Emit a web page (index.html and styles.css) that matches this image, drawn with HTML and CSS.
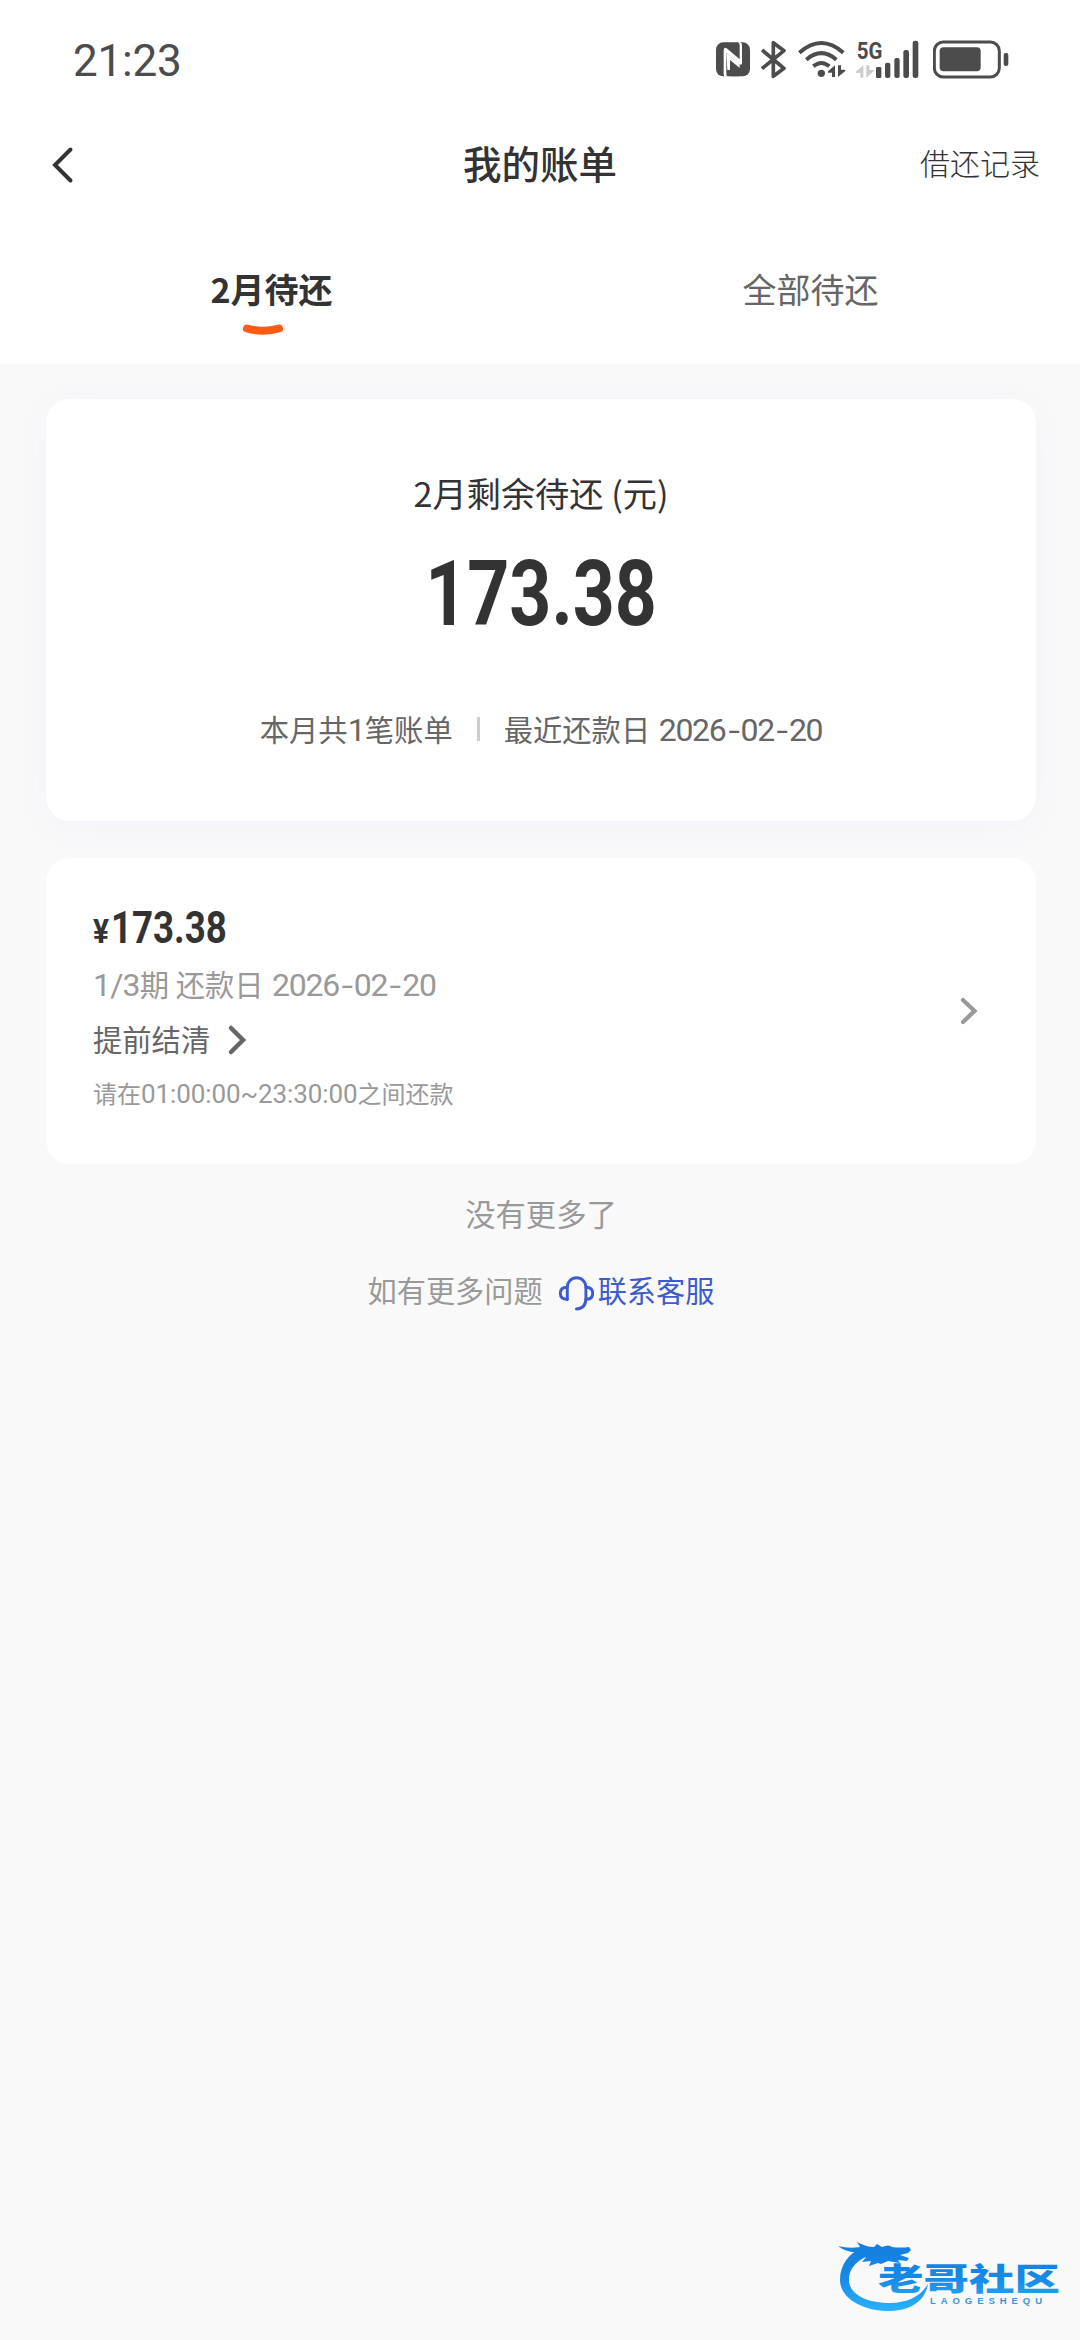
FILE: index.html
```html
<!DOCTYPE html>
<html lang="zh-CN">
<head>
<meta charset="utf-8">
<title>我的账单</title>
<link rel="stylesheet" href="styles.css">
</head>
<body>
<div class="screen">
  <header class="top">
    <div class="status">
      <span class="clock">21:23</span>
      <div class="status-icons">
        <svg class="nfc" viewBox="48 60 102 120"><rect x="48" y="67" width="102" height="102" rx="22" fill="#4c4c4c"/><path d="M82 170H76q-5-1-5-8V92q0-13 11-6l37 32V76q0-7-5-10h6q6 3 6 10v52q0 10-8 4L79 99v60q0 8 3 11z" fill="#fff"/><path d="M79 99l40 33v12L90 120v30h-8z" fill="#fff"/><path d="M90 122l22 21q5 6 5 14v12H90z" fill="#4c4c4c"/></svg>
        <svg class="bt" viewBox="185 60 78 120"><path d="M188 90l66 55-32 24V68l32 24-66 54" fill="none" stroke="#4c4c4c" stroke-width="11" stroke-linejoin="round"/></svg>
        <svg class="wifi" viewBox="296 60 144 120"><g fill="none" stroke="#4c4c4c" stroke-width="12"><path d="M300 98q66-58 132 0"/><path d="M321 119q45-39 90 0"/><path d="M342 139q24-20 48 0"/></g><circle cx="366" cy="160" r="11" fill="#4c4c4c"/><path d="M407 136v35h-9v-13h-12v-4zM416 171v-35h9v13h13v4z" fill="#4c4c4c"/></svg>
        <svg class="signal" viewBox="468 60 189 120"><text class="net" x="470" y="117" textLength="77" lengthAdjust="spacingAndGlyphs">5G</text><path d="M490 136v37h-9v-14h-13v-4zM499 173v-37h9v14h13v4z" fill="#ccc"/><g fill="#4c4c4c"><rect x="528" y="141" width="16" height="33" rx="4"/><rect x="555" y="128" width="16" height="46" rx="6"/><rect x="583" y="114" width="16" height="60" rx="6"/><rect x="610" y="90" width="17" height="84" rx="7"/><rect x="638" y="62" width="17" height="112" rx="7"/></g></svg>
        <svg class="battery" viewBox="700 60 228 120"><rect x="704" y="66" width="195" height="105" rx="27" fill="none" stroke="#4c4c4c" stroke-width="9"/><rect x="720" y="82" width="123" height="72" rx="12" fill="#4c4c4c"/><rect x="912" y="99" width="14" height="39" rx="6" fill="#4c4c4c"/></svg>
      </div>
    </div>
    <nav class="navbar">
      <svg class="back" viewBox="0 0 24 40"><path d="M19.500 4.500 4 20l15.500 15.500" fill="none" stroke="#333" stroke-width="4" stroke-linecap="round"/></svg>
      <h1 class="title">我的账单</h1>
      <span class="records">借还记录</span>
    </nav>
    <div class="tabs">
      <div class="tab tab-active"><span>2月待还</span>
        <svg class="smile" viewBox="0 0 42 14"><path d="M5 4.500Q21 9 37 4.500" fill="none" stroke="#ff5a12" stroke-width="8" stroke-linecap="round"/></svg>
      </div>
      <div class="tab"><span>全部待还</span></div>
    </div>
  </header>
  <main class="content">
    <section class="card summary">
      <div class="summary-label">2月剩余待还 (元)</div>
      <div class="amount">173.38</div>
      <div class="summary-meta"><span>本月共<span class="num">1</span>笔账单</span><i class="divider"></i><span>最近还款日 <span class="num date">2026<b>-</b>02<b>-</b>20</span></span></div>
    </section>
    <section class="card bill">
      <div class="bill-info">
        <div class="price"><span class="yen">¥</span><span class="price-value">173.38</span></div>
        <div class="term"><span class="num frac">1/3</span>期 还款日 <span class="num date">2026<b>-</b>02<b>-</b>20</span></div>
        <div class="settle">提前结清<svg class="settle-arrow" viewBox="0 0 20 32"><path d="M4 4l12 12L4 28" fill="none" stroke="#666" stroke-width="4.500" stroke-linecap="round"/></svg></div>
        <div class="hint">请在<span class="num clock-range">01:00:00~23:30:00</span>之间还款</div>
      </div>
      <svg class="bill-arrow" viewBox="0 0 20 32"><path d="M4 5l11.500 11L4 27" fill="none" stroke="#999" stroke-width="4.200" stroke-linecap="round"/></svg>
    </section>
    <div class="no-more">没有更多了</div>
    <div class="help"><span>如有更多问题</span>
      <svg class="headset" viewBox="0 0 36 36"><g fill="none" stroke="#3d5bd0" stroke-width="2.900" stroke-linecap="round"><path d="M9.300 24.500V12a9.300 9.300 0 0 1 18.600 0v11.500q0 10-9.500 10.500"/><path d="M9.300 12.300q-7 0-7 6t7 6M27.900 12.300q6.800 0 6.800 6t-6.800 6"/></g></svg>
      <a class="service">联系客服</a></div>
  </main>
  <svg class="watermark" viewBox="0 0 270 120">
    <defs><linearGradient id="blue" x1="0" y1="28" x2="0" y2="92" gradientUnits="userSpaceOnUse"><stop offset="0" stop-color="#1480e0"/><stop offset=".45" stop-color="#1688e6"/><stop offset="1" stop-color="#2ab4fb"/></linearGradient></defs>
    <g fill="url(#blue)">
      <path d="M52 28C38 33 30 46 30 60c0 18 22 31 49 31 20 0 36-9 39-27-7 12-20 19-38 19-24 0-41-9-41-23 0-13 10-22 24-25z"/>
      <path d="M28 26Q39 29 50 27L47 22Q56 27 64 27L67 24 72 27Q79 24 82 27 90 28 99 27L101 30 98 33 90 35 99 38 97 41 88 40 90 43 78 41 71 44 68 43 59 46 61 41 52 42 57 36 48 32Q37 33 28 26z"/>
      <text class="wm-name" x="68" y="70" textLength="182" lengthAdjust="spacingAndGlyphs">老哥社区</text>
    </g>
    <text class="wm-sub" x="120" y="83.500" textLength="112">LAOGESHEQU</text>
  </svg>
</div>
</body>
</html>
```
FILE: styles.css
```css
* { box-sizing: border-box; }
body { margin: 0; background: #f9f9f9; font-family: "Noto Sans CJK SC", sans-serif; color: #333; }
svg { display: block; flex: none; }
.screen { position: relative; width: 1080px; height: 2340px; overflow: hidden; background: #f9f9f9; }
.top { height: 364px; background: #fff; }
.status { height: 120px; padding: 0 71px 0 73px; display: flex; align-items: center; justify-content: space-between; }
.clock { padding-top: 1px; font: 400 44px/52px Roboto, sans-serif; letter-spacing: -.2px; color: #4c4c4c; }
.status-icons { display: flex; height: 40px; }
.status-icons svg { height: 40px; }
.nfc { width: 34px; margin-right: 11.700px; }
.bt { width: 26px; margin-right: 11px; }
.wifi { width: 48px; margin-right: 9.300px; }
.signal { width: 63px; margin-right: 14.300px; overflow: visible; }
.battery { width: 76px; }
.net { font: 700 72px Roboto, sans-serif; fill: #4c4c4c; }
.navbar { height: 88px; padding: 0 40px 0 51px; display: grid; grid-template-columns: 1fr auto 1fr; align-items: center; }
.back { width: 24px; height: 40px; margin-top: 2px; }
.title { margin: -4px 0 0 -11px; font-size: 38.500px; line-height: 56px; font-weight: 500; }
.records { justify-self: end; margin-top: -4px; font-size: 30px; line-height: 44px; font-weight: 300; }
.tabs { display: grid; grid-template-columns: 1fr 1fr; height: 156px; padding: 56px 0 0 2px; }
.tab { display: flex; flex-direction: column; align-items: center; font-size: 34px; line-height: 50px; color: #666; }
.tab-active { font-weight: 700; color: #333; }
.smile { width: 42px; height: 14px; margin: 10px 18px 0 0; }
.content { padding: 35px 44px 0 46px; }
.card { background: #fff; border-radius: 24px; }
.summary { height: 422px; padding-top: 68px; text-align: center; box-shadow: 0 6px 36px rgba(80, 100, 220, .04); }
.summary-label { font-size: 34.200px; line-height: 50px; }
.amount { font: 700 90px/100px Roboto, sans-serif; margin-top: 28px; transform: scaleX(.815); }
.summary-meta { display: flex; justify-content: center; align-items: center; margin-top: 61px; font-size: 29.300px; line-height: 44px; color: #666; white-space: nowrap; }
.divider { width: 3px; height: 24px; margin: 0 24px; background: #ccc; }
.num { font-family: Roboto, sans-serif; font-size: 32px; letter-spacing: -.8px; }
.num b { display: inline-block; width: 15px; font-weight: 400; text-align: center; transform: scaleX(1.300); }
.date { margin-left: 2px; letter-spacing: -1.300px; }
.bill { display: flex; align-items: center; justify-content: space-between; height: 306px; margin-top: 37px; padding: 0 57px 0 47px; }
.bill-info { height: 306px; padding-top: 43px; white-space: nowrap; }
.price { display: flex; align-items: baseline; height: 54px; font: 700 45px/54px Roboto, sans-serif; }
.yen { width: 17.500px; font-size: 34px; transform: scaleX(.880); transform-origin: left; }
.price-value { transform: scaleX(.815); transform-origin: left; }
.term { height: 44px; margin-top: 6px; font-size: 29.300px; line-height: 44px; color: #999; }
.settle { display: flex; align-items: center; height: 44px; margin-top: 11px; font-size: 29.300px; line-height: 44px; color: #666; }
.settle-arrow { width: 20px; height: 32px; margin: 4px 0 0 17px; }
.hint { height: 36px; margin-top: 15px; font-size: 24px; line-height: 36px; color: #999; }
.hint .num { font-size: 26px; letter-spacing: -.1px; }
.bill-arrow { width: 20px; height: 32px; }
.no-more { margin-top: 27px; text-align: center; font-size: 30.300px; line-height: 44px; color: #999; }
.help { display: flex; justify-content: center; align-items: center; margin-top: 32px; font-size: 29.200px; line-height: 44px; color: #999; }
.headset { width: 36px; height: 36px; margin: 8px 4px 0 15px; }
.service { color: #3d5bd0; }
.watermark { position: absolute; left: 810px; top: 2220px; width: 270px; height: 120px; }
.wm-name { font: 900 31px "Noto Sans CJK SC", sans-serif; }
.wm-sub { font: 700 9.500px "Liberation Sans", sans-serif; fill: #3d94e0; }
```
